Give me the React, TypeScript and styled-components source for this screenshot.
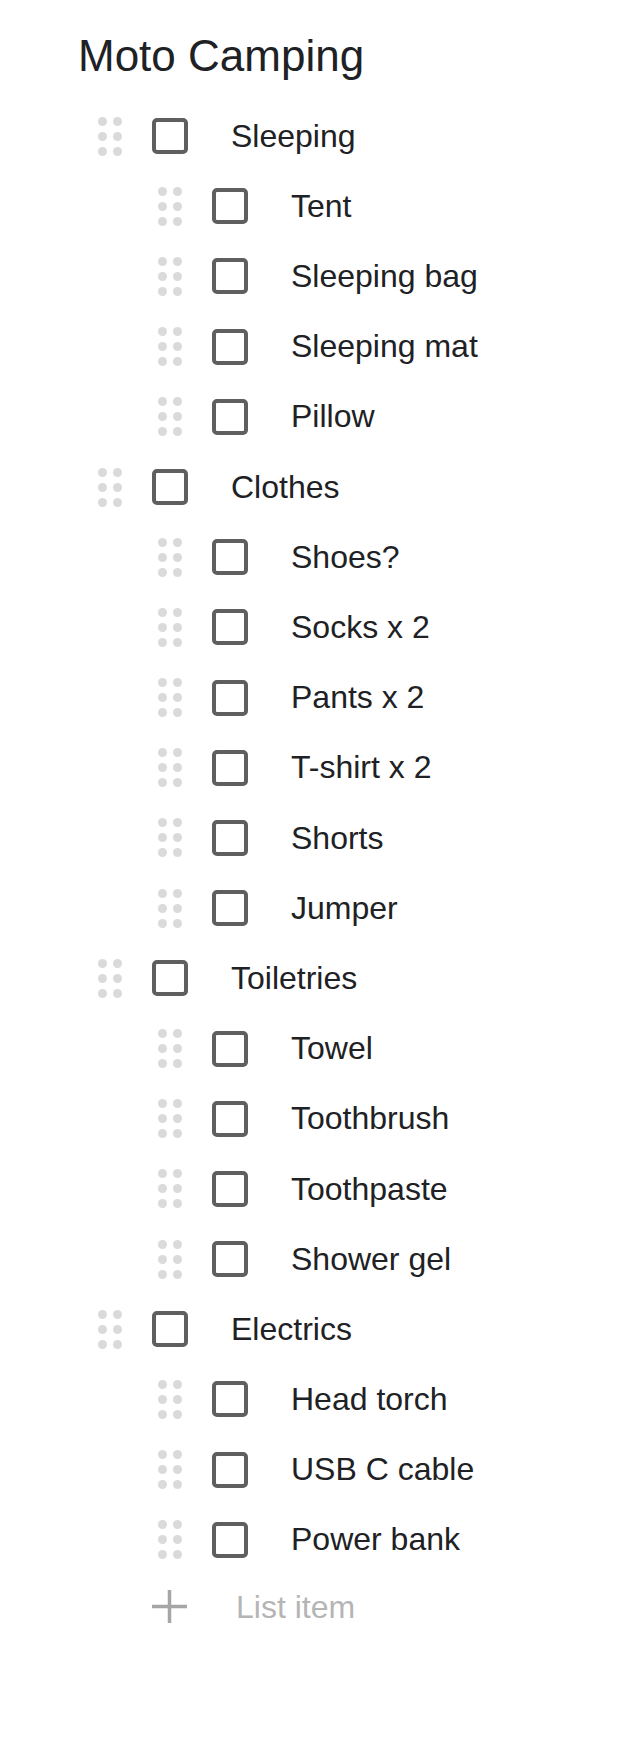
import React from "react";
import styled, { createGlobalStyle } from "styled-components";

const Global = createGlobalStyle`
  html, body { margin: 0; padding: 0; background: #ffffff; }
  body { font-family: "Liberation Sans", Arial, sans-serif; color: #202124; }
`;

const Page = styled.div`
  display: flex;
  flex-direction: column;
  padding-top: 34px;
`;

const Title = styled.h1`
  margin: 0 0 23px 78px;
  font-size: 44px;
  line-height: 44px;
  font-weight: 400;
  color: #202124;
`;

const List = styled.div`
  display: flex;
  flex-direction: column;
`;

const Row = styled.div<{ $child?: boolean }>`
  display: flex;
  align-items: center;
  height: 70.2px;
  padding-left: ${(p) => (p.$child ? 158 : 98)}px;
`;

const Handle = styled.div`
  display: grid;
  grid-template-columns: repeat(2, 9px);
  grid-template-rows: repeat(3, 9px);
  gap: 6px;
  margin-right: 30px;
`;

const Dot = styled.span`
  width: 9px;
  height: 9px;
  border-radius: 50%;
  background: #dadada;
`;

const Box = styled.div`
  width: 36px;
  height: 36px;
  box-sizing: border-box;
  border: 4px solid #5f5f5f;
  border-radius: 5px;
  margin-right: 43px;
  flex-shrink: 0;
`;

const Label = styled.span`
  font-size: 32px;
  line-height: 1.15;
  color: #202124;
  white-space: nowrap;
`;

const AddRow = styled.div`
  display: flex;
  align-items: center;
  height: 60px;
  padding-top: 2px;
  padding-left: 152px;
`;

const AddLabel = styled.span`
  font-size: 32px;
  line-height: 1.15;
  color: #b5b5b5;
  margin-left: 49px;
`;

const PlusIcon = () => (
  <svg width="35" height="35" viewBox="0 0 35 35">
    <line x1="0" y1="17.5" x2="35" y2="17.5" stroke="#a6a6a6" strokeWidth="3.5" />
    <line x1="17.5" y1="1" x2="17.5" y2="34" stroke="#a6a6a6" strokeWidth="3.5" />
  </svg>
);

type Item = { text: string; child?: boolean };

const items: Item[] = [
  { text: "Sleeping" },
  { text: "Tent", child: true },
  { text: "Sleeping bag", child: true },
  { text: "Sleeping mat", child: true },
  { text: "Pillow", child: true },
  { text: "Clothes" },
  { text: "Shoes?", child: true },
  { text: "Socks x 2", child: true },
  { text: "Pants x 2", child: true },
  { text: "T-shirt x 2", child: true },
  { text: "Shorts", child: true },
  { text: "Jumper", child: true },
  { text: "Toiletries" },
  { text: "Towel", child: true },
  { text: "Toothbrush", child: true },
  { text: "Toothpaste", child: true },
  { text: "Shower gel", child: true },
  { text: "Electrics" },
  { text: "Head torch", child: true },
  { text: "USB C cable", child: true },
  { text: "Power bank", child: true },
];

export default function App() {
  return (
    <>
      <Global />
      <Page>
        <Title>Moto Camping</Title>
        <List>
          {items.map((it, i) => (
            <Row key={i} $child={it.child}>
              <Handle>
                {Array.from({ length: 6 }).map((_, j) => (
                  <Dot key={j} />
                ))}
              </Handle>
              <Box />
              <Label>{it.text}</Label>
            </Row>
          ))}
          <AddRow>
            <PlusIcon />
            <AddLabel>List item</AddLabel>
          </AddRow>
        </List>
      </Page>
    </>
  );
}
